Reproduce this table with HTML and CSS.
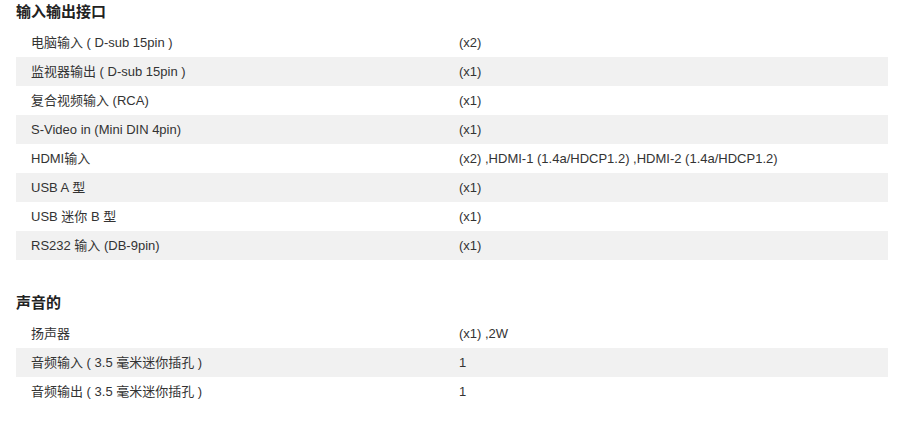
FILE: index.html
```html
<!DOCTYPE html>
<html lang="zh">
<head>
<meta charset="utf-8">
<title>规格</title>
<link rel="stylesheet" href="styles.css">
</head>
<body>
<div class="spec">
  <section class="group">
    <h2 class="group-title">输入输出接口</h2>
    <div class="rows">
      <div class="row"><div class="label">电脑输入 ( D-sub 15pin )</div><div class="value">(x2)</div></div>
      <div class="row"><div class="label">监视器输出 ( D-sub 15pin )</div><div class="value">(x1)</div></div>
      <div class="row"><div class="label">复合视频输入 (RCA)</div><div class="value">(x1)</div></div>
      <div class="row"><div class="label">S-Video in (Mini DIN 4pin)</div><div class="value">(x1)</div></div>
      <div class="row"><div class="label">HDMI输入</div><div class="value">(x2) ,HDMI-1 (1.4a/HDCP1.2) ,HDMI-2 (1.4a/HDCP1.2)</div></div>
      <div class="row"><div class="label">USB A 型</div><div class="value">(x1)</div></div>
      <div class="row"><div class="label">USB 迷你 B 型</div><div class="value">(x1)</div></div>
      <div class="row"><div class="label">RS232 输入 (DB-9pin)</div><div class="value">(x1)</div></div>
    </div>
  </section>
  <section class="group group-next">
    <h2 class="group-title">声音的</h2>
    <div class="rows">
      <div class="row"><div class="label">扬声器</div><div class="value">(x1) ,2W</div></div>
      <div class="row"><div class="label">音频输入 ( 3.5 毫米迷你插孔 )</div><div class="value">1</div></div>
      <div class="row"><div class="label">音频输出 ( 3.5 毫米迷你插孔 )</div><div class="value">1</div></div>
    </div>
  </section>
</div>
</body>
</html>
```
FILE: styles.css
```css
* { box-sizing: border-box; }
html, body {
  margin: 0;
  padding: 0;
  background: #ffffff;
}
body {
  font-family: "Liberation Sans", Arial, "Noto Sans CJK SC", sans-serif;
  color: #333333;
}
.spec {
  width: 888px;
  padding-left: 16px;
}
.group-title {
  margin: 0 0 4px 0;
  font-size: 15px;
  line-height: 24px;
  font-weight: bold;
  color: #222222;
}
.group-next {
  margin-top: 31px;
}
.rows {
  display: flex;
  flex-direction: column;
}
.row {
  display: grid;
  grid-template-columns: 443px 1fr;
  height: 29px;
  align-items: center;
  font-size: 13px;
  line-height: 29px;
}
.row:nth-child(even) {
  background: #f1f1f1;
}
.label {
  padding-left: 15px;
  white-space: nowrap;
}
.value {
  white-space: nowrap;
}
```
